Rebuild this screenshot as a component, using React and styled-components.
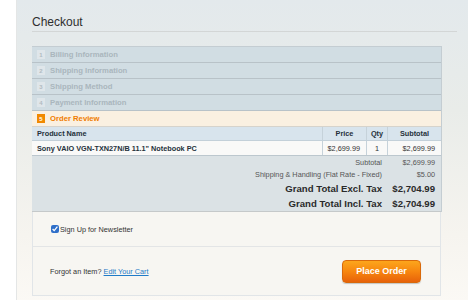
import React from 'react';
import styled, { createGlobalStyle } from 'styled-components';

//  ----------------------------------------------------------------------------
//  Styles
//  ----------------------------------------------------------------------------
const Global = createGlobalStyle`
    html, body {
        margin: 0;
        padding: 0;
        background: #ffffff;
        font-family: "Liberation Sans", Arial, sans-serif;
    }
`;

const Page = styled.div`
    width: 468px;
    height: 300px;
    overflow: hidden;
`;

const Panel = styled.div`
    margin-left: 16px;
    width: 425px;
    height: 300px;
    padding: 14px 11px 0 15px;
    box-sizing: content-box;
    border-left: 1px solid #e4e6e6;
    background: linear-gradient(to bottom, #e3e9ec 0%, #e9ece9 35%, #f6f4ef 75%, #fcfaf6 100%);
`;

const Title = styled.h1`
    margin: 0;
    font-size: 12px;
    line-height: 16px;
    font-weight: normal;
    color: #2e2e2e;
    padding-bottom: 1px;
    border-bottom: 1px solid #d3d6d6;
`;

const Steps = styled.div`
    margin-top: 14px;
    width: 409px;
    border-top: 1px solid #c4cdd2;
    border-right: 1px solid #c4cdd2;
`;

const Step = styled.div`
    display: flex;
    align-items: center;
    height: 15px;
    padding-left: 5px;
    border-bottom: 1px solid ${(p) => (p.$active ? '#d6d3cc' : '#b8c2c8')};
    background: ${(p) => (p.$active ? '#faf0e1' : '#d1dde3')};
`;

const Badge = styled.span`
    display: inline-flex;
    align-items: center;
    justify-content: center;
    width: 8px;
    height: 9px;
    margin-right: 5px;
    font-size: 6px;
    font-weight: bold;
    background: ${(p) => (p.$active ? '#f18900' : '#dfe6ea')};
    color: ${(p) => (p.$active ? '#ffffff' : '#b1bbc1')};
`;

const StepLabel = styled.span`
    font-size: 7.7px;
    font-weight: bold;
    color: ${(p) => (p.$active ? '#f07d00' : '#aab6bd')};
`;

const Table = styled.div`
    width: 409px;
    border-right: 1px solid #c4cdd2;
`;

const Row = styled.div`
    display: grid;
    grid-template-columns: 1fr 44px 21px 54px;
    height: ${(p) => p.$h}px;
    background: ${(p) => p.$bg};
    border-bottom: 1px solid ${(p) => p.$line};
`;

const Cell = styled.div`
    display: flex;
    align-items: center;
    justify-content: ${(p) => p.$align || 'flex-start'};
    padding: 0 ${(p) => (p.$align === 'flex-end' ? 6 : 5)}px 0 5px;
    font-size: 7.3px;
    font-weight: ${(p) => (p.$bold ? 'bold' : 'normal')};
    color: ${(p) => (p.$bold ? '#25313b' : '#333')};
    border-left: ${(p) => (p.$sep ? '1px solid #c6d2da' : 'none')};
    white-space: nowrap;
`;

const Totals = styled.div`
    display: grid;
    grid-template-columns: 1fr 54px;
    grid-auto-rows: auto;
    align-content: start;
    padding-top: 1px;
    height: 54px;
    background: #dbe2e5;
    border-bottom: 1px solid #c5c9ca;
`;

const TotalLabel = styled.div`
    text-align: right;
    padding-right: 5px;
    font-size: ${(p) => (p.$grand ? 9.6 : 7.3)}px;
    line-height: ${(p) => (p.$grand ? 15 : 12)}px;
    font-weight: ${(p) => (p.$grand ? 'bold' : 'normal')};
    color: ${(p) => (p.$grand ? '#2a2a2a' : '#555')};
    white-space: nowrap;
`;

const TotalValue = styled(TotalLabel)`
    padding-right: 6px;
`;

const Lower = styled.div`
    width: 407px;
    background: #f7f6f2;
    border: 1px solid #e1e5e8;
    border-top: none;
`;

const Newsletter = styled.label`
    display: flex;
    align-items: center;
    height: 34px;
    padding-left: 18px;
    border-bottom: 1px solid #e3e5e6;
    font-size: 7.3px;
    color: #333;
`;

const Check = styled.input`
    width: 8px;
    height: 8px;
    margin: 0 1px 0 0;
    accent-color: #2f6fc9;
`;

const Footer = styled.div`
    display: flex;
    align-items: center;
    justify-content: space-between;
    height: 48px;
    padding: 0 19px 0 17px;
    font-size: 7.3px;
    color: #333;
`;

const Link = styled.a`
    color: #1f7bc8;
    text-decoration: underline;
`;

const Button = styled.button`
    width: 79px;
    height: 23px;
    border: 1px solid #d9690a;
    border-radius: 4px;
    background: linear-gradient(to bottom, #fca61c 0%, #f7860f 50%, #e7620a 100%);
    box-shadow: 0 1px 1px rgba(0, 0, 0, 0.2);
    color: #fff;
    font-family: "Liberation Sans", Arial, sans-serif;
    font-size: 9px;
    font-weight: bold;
    cursor: pointer;
`;

//  ----------------------------------------------------------------------------
//  Data
//  ----------------------------------------------------------------------------
const steps = [
    'Billing Information',
    'Shipping Information',
    'Shipping Method',
    'Payment Information',
    'Order Review',
];

const totals = [
    { label: 'Subtotal', value: '$2,699.99' },
    { label: 'Shipping & Handling (Flat Rate - Fixed)', value: '$5.00' },
    { label: 'Grand Total Excl. Tax', value: '$2,704.99', grand: true },
    { label: 'Grand Total Incl. Tax', value: '$2,704.99', grand: true },
];

//  ----------------------------------------------------------------------------
//  Component
//  ----------------------------------------------------------------------------
const App = () => (
    <Page>
        <Global />
        <Panel>
            <Title>Checkout</Title>
            <Steps>
                {steps.map((s, i) => {
                    const active = i === steps.length - 1;
                    return (
                        <Step key={s} $active={active}>
                            <Badge $active={active}>{i + 1}</Badge>
                            <StepLabel $active={active}>{s}</StepLabel>
                        </Step>
                    );
                })}
            </Steps>
            <Table>
                <Row $h={13} $bg="#d8e4ed" $line="#c3d0d9">
                    <Cell $bold>Product Name</Cell>
                    <Cell $bold $sep $align="center">Price</Cell>
                    <Cell $bold $sep $align="center">Qty</Cell>
                    <Cell $bold $sep $align="center">Subtotal</Cell>
                </Row>
                <Row $h={14} $bg="#f9f9f8" $line="#bcc7ce">
                    <Cell $bold>Sony VAIO VGN-TXN27N/B 11.1" Notebook PC</Cell>
                    <Cell $sep $align="flex-end">$2,699.99</Cell>
                    <Cell $sep $align="center">1</Cell>
                    <Cell $sep $align="flex-end">$2,699.99</Cell>
                </Row>
                <Totals>
                    {totals.map((t) => (
                        <React.Fragment key={t.label}>
                            <TotalLabel $grand={t.grand}>{t.label}</TotalLabel>
                            <TotalValue $grand={t.grand}>{t.value}</TotalValue>
                        </React.Fragment>
                    ))}
                </Totals>
            </Table>
            <Lower>
                <Newsletter>
                    <Check type="checkbox" defaultChecked />
                    Sign Up for Newsletter
                </Newsletter>
                <Footer>
                    <span>
                        Forgot an Item? <Link href="#">Edit Your Cart</Link>
                    </span>
                    <Button>Place Order</Button>
                </Footer>
            </Lower>
        </Panel>
    </Page>
);

export default App;
